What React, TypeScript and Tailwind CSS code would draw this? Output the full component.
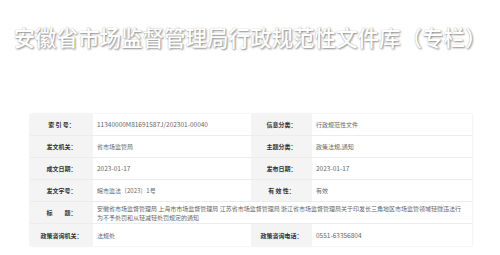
export default function App() {
  const cjk = { fontFamily: '"Noto Sans CJK SC", "Noto Sans", sans-serif' };
  const label =
    "flex items-center justify-center bg-[#f4f4f4] text-[#333] font-bold border-b border-[#ececec] whitespace-nowrap";
  const value =
    "flex items-center pl-[4px] pr-[3px] bg-white text-[#666] border-b border-[#ececec] whitespace-nowrap";

  return (
    <div className="w-[500px] h-[255px] bg-white overflow-hidden" style={cjk}>
      {/* 标题 */}
      <div className="pt-[26px] h-[48px]">
        <h1 className="text-center text-[21.5px] leading-[22px] font-medium text-white [text-shadow:1px_1px_2px_#8a8a8a,0_0_1px_#b0b0b0]">
          安徽省市场监督管理局行政规范性文件库（专栏）
        </h1>
      </div>

      {/* 信息表 */}
      <div className="mt-[66px] ml-[30px] w-[442px] grid grid-cols-[63px_158px_61px_160px] auto-rows-[22px] text-[6px] leading-[9px] shadow-[0_0_2px_rgba(0,0,0,0.12)]">
        <div className={label}>索 引 号：</div>
        <div className={value + " text-[6.5px]"}>11340000M81691587J/202301-00040</div>
        <div className={label}>信息分类：</div>
        <div className={value}>行政规范性文件</div>

        <div className={label}>发文机关：</div>
        <div className={value}>省市场监管局</div>
        <div className={label}>主题分类：</div>
        <div className={value}>政策法规,通知</div>

        <div className={label}>成文日期：</div>
        <div className={value + " text-[6.5px]"}>2023-01-17</div>
        <div className={label}>发布日期：</div>
        <div className={value + " text-[6.5px]"}>2023-01-17</div>

        <div className={label}>发文字号：</div>
        <div className={value}>皖市监法〔2023〕1号</div>
        <div className={label}>有 效 性：</div>
        <div className={value}>有效</div>

        <div className={label}>标　　题：</div>
        <div className="col-span-3 flex items-center pl-[4px] pr-[8px] bg-white text-[#666] border-b border-[#ececec]">
          <p>
            安徽省市场监督管理局 上海市市场监督管理局 江苏省市场监督管理局 浙江省市场监督管理局关于印发长三角地区市场监管领域轻微违法行为不予处罚和从轻减轻处罚规定的通知
          </p>
        </div>

        <div className={label + " border-b-0"}>政策咨询机关：</div>
        <div className={value + " border-b-0"}>法规处</div>
        <div className={label + " border-b-0"}>政策咨询电话：</div>
        <div className={value + " border-b-0 text-[6.5px]"}>0551-63356804</div>
      </div>
    </div>
  );
}
